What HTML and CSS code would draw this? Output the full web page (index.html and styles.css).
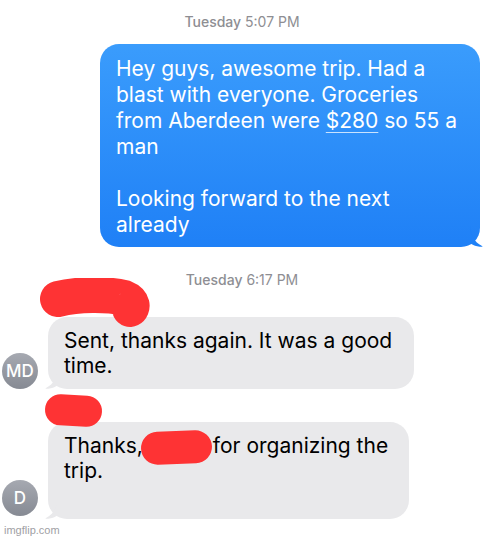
FILE: index.html
```html
<!DOCTYPE html>
<html lang="en">
<head>
    <meta charset="UTF-8">
    <meta name="viewport" content="width=device-width, initial-scale=1.0">
    <title>Messages</title>
    <link rel="stylesheet" href="styles.css">
</head>
<body>
    <div class="thread">
        <div class="stamp"><b>Tuesday</b> 5:07 PM</div>

        <!-- outgoing -->
        <div class="bubble out">
            Hey guys, awesome trip. Had a<br>
            blast with everyone. Groceries<br>
            from Aberdeen were <span class="link">$280</span> so 55 a<br>
            man<br>
            <br>
            Looking forward to the next<br>
            already
            <svg class="tail tail-out" width="20" height="22" viewBox="0 0 20 22">
                <path d="M0 0 C1 10 4 17 12 21 C14 22 9 22 6 21 C3 20 1 19 -2 17 Z" fill="#1f81f7"/>
            </svg>
        </div>

        <div class="stamp stamp2"><b>Tuesday</b> 6:17 PM</div>

        <div class="row row1">
            <div class="avatar">MD</div>
            <div class="bubble in in1">
                Sent, thanks again. It was a good<br>
                time.
                <svg class="tail tail-in" width="20" height="22" viewBox="0 0 20 22">
                    <path d="M20 0 C19 10 16 17 8 21 C6 22 11 22 14 21 C17 20 19 19 22 17 Z" fill="#e9e9eb"/>
                </svg>
            </div>
            <svg class="scribble s1" width="116" height="52" viewBox="0 0 116 52">
                <path d="M20 21 C40 16 70 16 86 20 C96 24 94 30 92 31" fill="none" stroke="#fe3334" stroke-width="36" stroke-linecap="round" stroke-linejoin="round"/>
            </svg>
        </div>

        <div class="row row2">
            <div class="avatar">D</div>
            <div class="bubble in in2">
                Thanks,<span class="redact"></span>for organizing the<br>
                trip.<br>
                &nbsp;
                <svg class="tail tail-in" width="20" height="22" viewBox="0 0 20 22">
                    <path d="M20 0 C19 10 16 17 8 21 C6 22 11 22 14 21 C17 20 19 19 22 17 Z" fill="#e9e9eb"/>
                </svg>
            </div>
            <div class="scribble s2"></div>
        </div>
    </div>
    <div class="watermark">imgflip.com</div>
</body>
</html>
```

FILE: styles.css
```css
*{
    margin:0;
    padding:0;
    box-sizing:border-box;
}
body{
    width:500px;
    height:538px;
    background:#fff;
    font-family:Inter, "Liberation Sans", sans-serif;
    position:relative;
    overflow:hidden;
}
.thread{
    display:flex;
    flex-direction:column;
    padding-top:14px;
}
.stamp{
    text-align:center;
    font-size:14px;
    line-height:16px;
    color:#8e8e93;
    padding-right:16px;
}
.stamp b{
    font-weight:500;
}
.stamp2{
    margin-top:25px;
}

.bubble{
    position:relative;
    font-size:21px;
    border-radius:19px;
    white-space:nowrap;
}
.out{
    margin:14px 0 0 100px;
    width:380px;
    padding:12px 16px 9px;
    line-height:26px;
    color:#fff;
    background:linear-gradient(#3a9cfc, #1f80f6);
}
.link{
    text-decoration:underline;
    text-decoration-thickness:1px;
    text-underline-offset:4px;
    text-decoration-color:rgba(255,255,255,.75);
}
.tail{
    position:absolute;
    bottom:0;
}
.tail-out{
    right:-10px;
}
.tail-in{
    left:-10px;
}

/* incoming messages */
.row{
    position:relative;
    display:flex;
    align-items:flex-end;
    gap:10px;
    padding-left:2px;
}
.row1{
    margin-top:29px;
}
.row2{
    margin-top:33px;
}
.avatar{
    width:36px;
    height:36px;
    border-radius:50%;
    background:linear-gradient(#a6a9b1, #868a93);
    color:#fff;
    font-size:17px;
    font-weight:500;
    display:flex;
    align-items:center;
    justify-content:center;
    flex:none;
}
.row2 .avatar{
    margin-bottom:3px;
}
.in{
    background:#e9e9eb;
    color:#000;
    line-height:25px;
    padding:11px 16px 11px;
}
.in1{
    width:366px;
}
.in2{
    width:361px;
}
.redact{
    display:inline-block;
    width:71px;
    height:33px;
    margin:-8px 1px -8px -2px;
    vertical-align:middle;
    background:#fe3334;
    border-radius:17px;
    transform:rotate(-2deg);
}
.scribble{
    position:absolute;
}
.s1{
    left:38px;
    top:-39px;
}
.s2{
    left:45px;
    top:-27px;
    width:57px;
    height:31px;
    border-radius:16px;
    background:#fe3334;
    transform:rotate(3deg);
}
.watermark{
    position:absolute;
    left:4px;
    bottom:2px;
    font-size:11px;
    color:#a0a0a4;
    font-family:"Liberation Sans", sans-serif;
}
```
